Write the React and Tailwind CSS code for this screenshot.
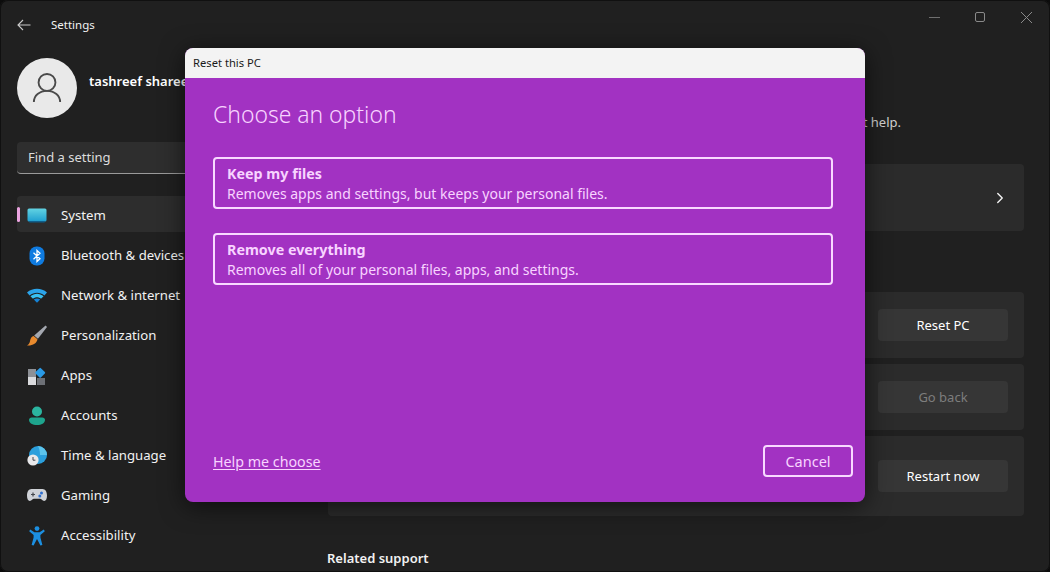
import React from 'react';
import { ChevronRight } from 'lucide-react';

const SystemIcon = () => (
  <svg width="20" height="20" viewBox="0 0 20 20">
    <defs>
      <linearGradient id="sys" x1="0" y1="0" x2="0" y2="1">
        <stop offset="0" stopColor="#62d3e2" />
        <stop offset="1" stopColor="#1f9fd0" />
      </linearGradient>
    </defs>
    <rect x="0.5" y="2.5" width="19" height="13" rx="1.5" fill="url(#sys)" />
    <rect x="2" y="15" width="16" height="1.5" rx="0.7" fill="#0f5f8c" />
  </svg>
);

const BluetoothIcon = () => (
  <svg width="20" height="20" viewBox="0 0 20 20">
    <rect x="2.5" y="0.5" width="15" height="19" rx="7" fill="#0f7be0" />
    <path d="M6.5 6.8 13 12.8 10 15.6V4.4L13 7.2 6.5 13.2" fill="none" stroke="#fff" strokeWidth="1.3" />
  </svg>
);

const WifiIcon = () => (
  <svg width="20" height="20" viewBox="0 0 20 20">
    <path d="M0 6.600C5.500 1.600 14.500 1.600 20 6.600L17.400 9.400C13 5.800 7 5.800 2.600 9.400Z" fill="#2ba4ea" />
    <path d="M3.400 10.200C7.400 6.800 12.600 6.800 16.600 10.200L14 12.800C11.600 10.800 8.400 10.800 6 12.800Z" fill="#38c0f2" />
    <path d="M6.800 13.600C8.800 12 11.200 12 13.200 13.600L10 16.800Z" fill="#1583d6" />
  </svg>
);

const BrushIcon = () => (
  <svg width="21" height="22" viewBox="0 0 21 22">
    <path d="M19.500 0 21 1.500 11.500 14 7.500 10.500Z" fill="#a4a8b0" />
    <path d="M7 11 11 14.500C10.500 18.800 5.500 21.500 0 21C2.400 19.600 2.900 18 3.300 15.800C3.700 13.400 5 11.500 7 11Z" fill="#e88a2e" />
  </svg>
);

const AppsIcon = () => (
  <svg width="20" height="20" viewBox="0 0 20 20">
    <rect x="1" y="3" width="8" height="8" fill="#8d9096" />
    <rect x="1" y="11" width="8" height="8" fill="#d9dadd" />
    <rect x="10" y="12" width="8" height="7" fill="#6d7076" />
    <rect x="9.4" y="3" width="7.6" height="7.6" rx="1" fill="#2a9ae6" transform="rotate(45 13.2 6.8)" />
  </svg>
);

const AccountsIcon = () => (
  <svg width="20" height="20" viewBox="0 0 20 20">
    <circle cx="10" cy="5.500" r="5" fill="#2bb5a0" />
    <path d="M2 14c0-1.600 1.200-2.500 2.600-2.500h10.800c1.400 0 2.600.9 2.600 2.500 0 3-3.600 5-8 5s-8-2-8-5Z" fill="#1ea48d" />
  </svg>
);

const TimeIcon = () => (
  <svg width="20" height="20" viewBox="0 0 20 20">
    <circle cx="11" cy="9" r="9" fill="#2b9fdc" />
    <path d="M11 0a9 9 0 0 1 9 9h-7C13 5 12 2 11 0Z" fill="#5cc4ec" />
    <circle cx="6" cy="14" r="5.600" fill="#e8e8ea" />
    <path d="M6 11v3.200h2.400" fill="none" stroke="#44474d" strokeWidth="1" />
  </svg>
);

const GamingIcon = () => (
  <svg width="20" height="20" viewBox="0 0 20 20">
    <path d="M4.500 3h11c2.800 0 4.500 2.800 4.500 6.500 0 3-1 5.500-2.800 5.500-2 0-2.700-2.200-4.200-2.200H7c-1.500 0-2.200 2.200-4.200 2.200C1 15 0 12.500 0 9.500 0 5.800 1.700 3 4.500 3Z" fill="#cfd2d7" />
    <path d="M4 8.500h4M6 6.500v4" stroke="#44474d" strokeWidth="1.200" />
    <circle cx="14.500" cy="7" r="1.500" fill="#2f6fd0" />
    <circle cx="12.800" cy="10" r="1.500" fill="#2f6fd0" />
  </svg>
);

const AccessibilityIcon = () => (
  <svg width="20" height="20" viewBox="0 0 20 20">
    <circle cx="10" cy="2.600" r="2.400" fill="#1c8fe0" />
    <path d="M3.200 3.400 7.400 6.200h5.200l4.200-2.800 1 1.800L13.400 9v2.500l2 7.500-2 .6L10 13l-3.400 6.600-2-.6 2-7.500V9L2.200 5.200Z" fill="#1c8fe0" />
  </svg>
);

const navItems = [
  { label: 'System', icon: SystemIcon, active: true },
  { label: 'Bluetooth & devices', icon: BluetoothIcon },
  { label: 'Network & internet', icon: WifiIcon },
  { label: 'Personalization', icon: BrushIcon },
  { label: 'Apps', icon: AppsIcon },
  { label: 'Accounts', icon: AccountsIcon },
  { label: 'Time & language', icon: TimeIcon },
  { label: 'Gaming', icon: GamingIcon },
  { label: 'Accessibility', icon: AccessibilityIcon },
];

const options = [
  { title: 'Keep my files', text: 'Removes apps and settings, but keeps your personal files.' },
  { title: 'Remove everything', text: 'Removes all of your personal files, apps, and settings.' },
];

const Sidebar = () => (
  <div className="w-[328px] shrink-0 pl-[17px] pr-[18px]">
    <div className="flex h-[50px] items-center">
      <svg width="14" height="12" viewBox="0 0 14 12" fill="none" stroke="#c9c9c9" strokeWidth="1.100">
        <path d="M13.500 6H1M6 1 1 6l5 5" />
      </svg>
      <span className="ml-[20px] text-[11.500px] text-[#f2f2f2]">Settings</span>
    </div>
    <div className="mt-2 flex h-[60px]">
      <div className="flex h-[60px] w-[60px] items-center justify-center rounded-full bg-[#e9e9e9]">
        <svg width="30" height="32" viewBox="0 0 32 34" fill="none" stroke="#4a4a4a" strokeWidth="2">
          <circle cx="16" cy="11" r="9" />
          <path d="M2 32c0-7 6-12 14-12s14 5 14 12" />
        </svg>
      </div>
      <div className="ml-3 mt-[14px] whitespace-nowrap text-[13px] font-semibold text-white">tashreef shareef</div>
    </div>
    <div className="mt-6 flex h-8 items-center rounded border-b border-[#9a9a9a] bg-[#2e2e2e] pl-[11px] pt-px text-[13px] text-[#dcdcdc]">
      Find a setting
    </div>
    <div className="mt-[22px] flex flex-col gap-1">
      {navItems.map(({ label, icon: Icon, active }) => (
        <div key={label} className={`relative flex h-9 items-center rounded pt-[3px] ${active ? 'bg-[#2d2d2d]' : ''}`}>
          {active && <div className="absolute left-0 top-[11px] h-[15px] w-[3px] rounded bg-[#eba4e0]" />}
          <div className="ml-[10px] flex w-5 justify-center"><Icon /></div>
          <span className="ml-[14px] whitespace-nowrap text-[13.200px] text-[#f2f2f2]">{label}</span>
        </div>
      ))}
    </div>
  </div>
);

const Card = ({ height, children }) => (
  <div className={`flex items-center justify-end rounded bg-[#2b2b2b] pr-4 ${height}`}>{children}</div>
);

const ActionButton = ({ label, disabled }) => (
  <button className={`h-8 w-[130px] rounded bg-[#363636] pt-0.5 text-[13px] ${disabled ? 'text-[#7d7d7d]' : 'text-white'}`}>
    {label}
  </button>
);

const Main = () => (
  <div className="min-w-0 flex-1 pr-[26px]">
    <div className="-mr-[25px] flex h-[34px] justify-end">
      <div className="flex w-[46px] items-center justify-center">
        <div className="h-px w-[11px] bg-[#6f6f6f]" />
      </div>
      <div className="flex w-[46px] items-center justify-center">
        <div className="h-[10px] w-[10px] rounded-[2px] border border-[#8a8a8a]" />
      </div>
      <div className="flex w-[46px] items-center justify-center">
        <svg width="11" height="11" viewBox="0 0 11 11" stroke="#8a8a8a" fill="none"><path d="M0 0l11 11M11 0 0 11" /></svg>
      </div>
    </div>
    <div className="mr-[123px] mt-[78px] h-5 whitespace-nowrap text-right text-[13px] leading-5 text-[#d0d0d0]">
      These recovery options might help.
    </div>
    <div className="mt-8">
      <Card height="h-[67px]">
        <ChevronRight size={18} strokeWidth={1.800} className="-mr-px text-[#f5f5f5]" />
      </Card>
    </div>
    <div className="mt-[61px] flex flex-col gap-1.5">
      <Card height="h-[66px]"><ActionButton label="Reset PC" /></Card>
      <Card height="h-[66px]"><ActionButton label="Go back" disabled /></Card>
      <Card height="h-[80px]"><ActionButton label="Restart now" /></Card>
    </div>
    <div className="-ml-px mt-8 h-5 text-[13px] font-semibold leading-5 text-[#f2f2f2]">Related support</div>
  </div>
);

const ResetDialog = () => (
  <div className="absolute left-[185px] top-[48px] flex h-[454px] w-[680px] flex-col overflow-hidden rounded-lg bg-[#a232c2] shadow-[0_4px_24px_rgba(0,0,0,0.6)]">
    <div className="flex h-[30px] shrink-0 items-center bg-[#f3f3f3] pl-2 text-[11.200px] text-[#1a1a1a]">Reset this PC</div>
    <div className="flex flex-1 flex-col pl-7 pr-3 text-[#f8d4ff]">
      <h1 className="mt-[21px] h-8 text-[22.900px] font-light leading-8">Choose an option</h1>
      <div className="mt-[26px] flex flex-col gap-6 pr-5">
        {options.map((option) => (
          <div key={option.title} className="flex h-[52px] flex-col justify-center rounded border-2 border-[#f8d9ff] pl-3 pt-0.5 text-[14px] leading-5">
            <div className="text-[14.300px] font-bold">{option.title}</div>
            <div>{option.text}</div>
          </div>
        ))}
      </div>
      <div className="mb-[25px] mt-auto flex items-center justify-between">
        <span className="pt-0.5 text-[14.250px] underline underline-offset-2">Help me choose</span>
        <button className="h-8 w-[90px] rounded border-2 border-[#f8d9ff] pt-0.5 text-[14.500px]">Cancel</button>
      </div>
    </div>
  </div>
);

export default function App() {
  return (
    <div className="relative h-[572px] w-[1050px] overflow-hidden bg-[#0c0c0c] font-['Noto_Sans','Open_Sans',sans-serif]">
      <div className="flex h-[572px] w-[1050px] overflow-hidden rounded-lg bg-[#202020] shadow-[inset_0_0_0_1px_#101010]">
        <Sidebar />
        <Main />
      </div>
      <ResetDialog />
    </div>
  );
}
